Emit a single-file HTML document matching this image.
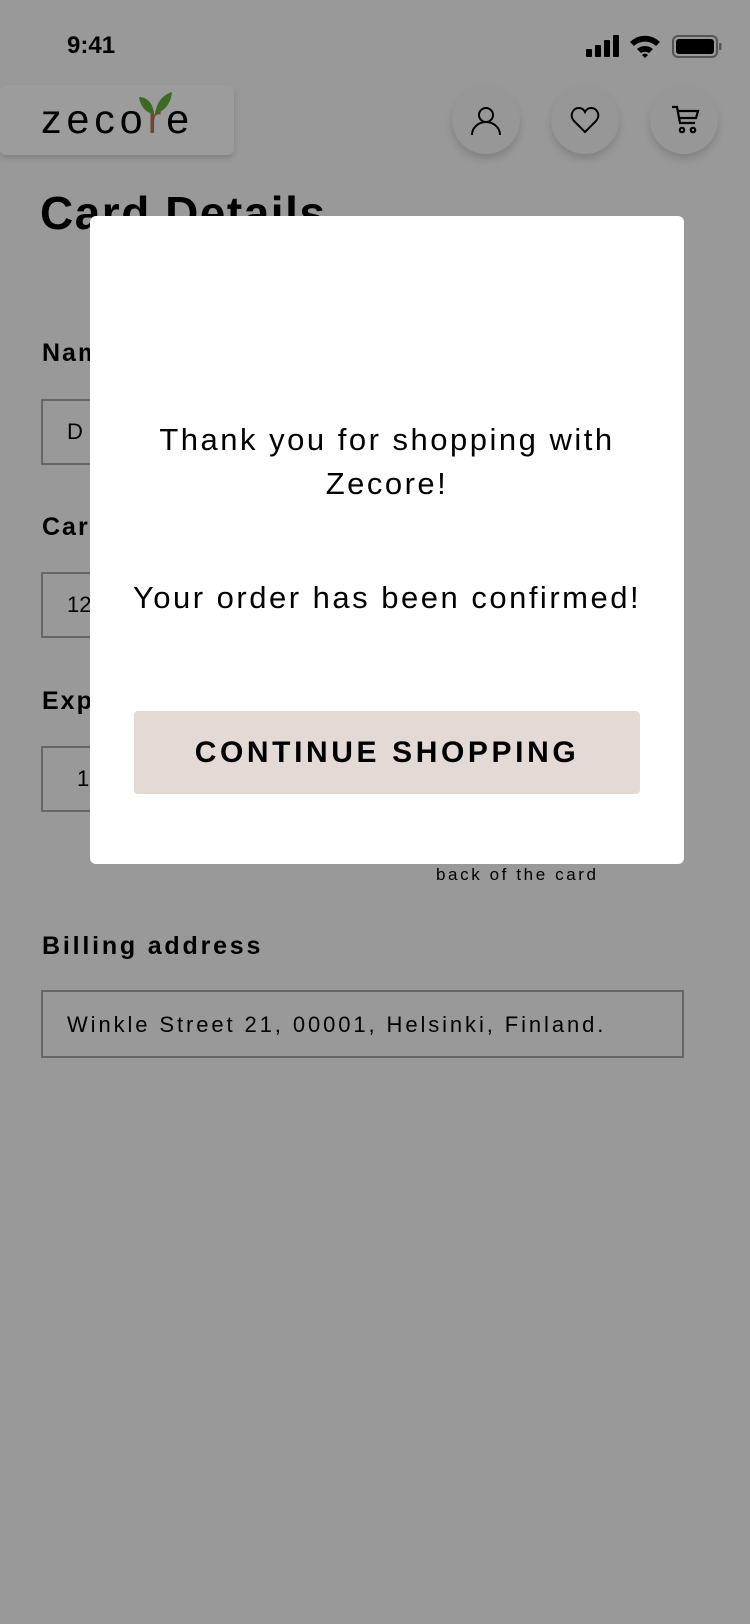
<!DOCTYPE html>
<html><head><meta charset="utf-8"><style>
*{margin:0;padding:0;box-sizing:border-box}
body{width:750px;height:1624px;background:#999;position:relative;overflow:hidden;font-family:"Liberation Sans",sans-serif;color:#000}
.a{position:absolute}
.lbl{position:absolute;left:42px;font-size:25px;font-weight:bold;letter-spacing:2px}
.box{position:absolute;left:41px;width:643px;height:66px;border:2px solid #666}
.circ{position:absolute;width:68px;height:68px;border-radius:50%;background:#979797;box-shadow:0 5px 8px rgba(0,0,0,0.15)}
.circ svg{position:absolute;left:19px;top:19px}
</style></head><body>
<div class="a" style="left:67px;top:32px;font-size:24px;font-weight:bold">9:41</div>
<svg class="a" style="left:586px;top:34px" width="136" height="26" viewBox="0 0 136 26">
<rect x="0" y="15" width="6" height="8" rx="1"/><rect x="9" y="11" width="6" height="12" rx="1"/><rect x="18" y="6" width="6" height="17" rx="1"/><rect x="27" y="1" width="6" height="22" rx="1"/>
<path d="M44 8 A21 21 0 0 1 74 8 L70 12 A16 16 0 0 0 48 12Z M51 15 A12 12 0 0 1 67 15 L63 19 A7 7 0 0 0 55 19Z M56 21 L59 24 L62 21 A4 4 0 0 0 56 21Z"/>
<rect x="87" y="2" width="44" height="21" rx="5" fill="none" stroke="#555" stroke-width="2"/><rect x="90" y="5" width="38" height="15" rx="3"/><rect x="133" y="9" width="2.5" height="7" fill="#555"/>
</svg>
<div class="a" style="left:0;top:85px;width:234px;height:70px;background:#9c9c9c;border-radius:6px;box-shadow:0 3px 6px rgba(0,0,0,0.15)"></div>
<div class="a" style="left:41px;top:96px;font-size:41px;letter-spacing:5px">zeco<span style="color:#6b4a2e">r</span>e</div>
<svg class="a" style="left:137px;top:91px" width="38" height="26" viewBox="0 0 38 26"><path d="M17 23 C8 22 3 14 2 6 C10 6 16 12 17 23Z" fill="#3b6b23"/><path d="M18 23 C20 10 26 4 35 1 C34 12 28 20 18 23Z" fill="#3b6b23"/></svg>
<div class="circ" style="left:452px;top:86px"><svg width="30" height="30" viewBox="0 0 30 30" fill="none" stroke="#000" stroke-width="2"><circle cx="15" cy="10" r="7"/><path d="M1 30 A14 13 0 0 1 29 30"/></svg></div>
<div class="circ" style="left:551px;top:86px"><svg width="30" height="30" viewBox="0 0 30 30" fill="none" stroke="#000" stroke-width="2"><path d="M15 27 L4 16 C-1 10 3 3 9 3 C12 3 14 5 15 7 C16 5 18 3 21 3 C27 3 31 10 26 16Z"/></svg></div>
<div class="circ" style="left:650px;top:86px"><svg width="32" height="32" viewBox="0 0 32 32" fill="none" stroke="#000" stroke-width="2.2"><path d="M3 2 H8 L11 18 H26 M9 6 H29 L27 13 H10"/><circle cx="13" cy="25" r="2.2"/><circle cx="24" cy="25" r="2.2"/></svg></div>
<div class="a" style="left:40px;top:186px;font-size:46px;font-weight:bold;letter-spacing:1.5px">Card Details</div>
<div class="lbl" style="top:339px">Name</div>
<div class="box" style="top:399px"><span class="a" style="left:24px;top:18px;font-size:22px">D</span></div>
<div class="lbl" style="top:513px">Card</div>
<div class="box" style="top:572px"><span class="a" style="left:24px;top:18px;font-size:22px">12</span></div>
<div class="lbl" style="top:687px">Exp</div>
<div class="box" style="top:746px"><span class="a" style="left:34px;top:18px;font-size:22px">1</span></div>
<div class="a" style="left:436px;top:865px;font-size:17px;letter-spacing:2.6px">back of the card</div>
<div class="lbl" style="top:932px;letter-spacing:2.8px">Billing address</div>
<div class="box" style="top:990px;height:68px"><span class="a" style="left:24px;top:20px;font-size:22px;letter-spacing:2.9px">Winkle Street 21, 00001, Helsinki, Finland.</span></div>
<div class="a" style="left:90px;top:216px;width:594px;height:648px;background:#fff;border-radius:6px"></div>
<div class="a" style="left:90px;top:418px;width:594px;text-align:center;font-size:31px;letter-spacing:2.5px;line-height:44px">Thank you for shopping with<br>Zecore!</div>
<div class="a" style="left:90px;top:576px;width:594px;text-align:center;font-size:31px;letter-spacing:2.5px;line-height:44px">Your order has been confirmed!</div>
<div class="a" style="left:134px;top:711px;width:506px;height:83px;background:#e3dad6;border-radius:4px;text-align:center;line-height:83px;font-size:30px;font-weight:bold;letter-spacing:3.6px">CONTINUE SHOPPING</div>
</body></html>
